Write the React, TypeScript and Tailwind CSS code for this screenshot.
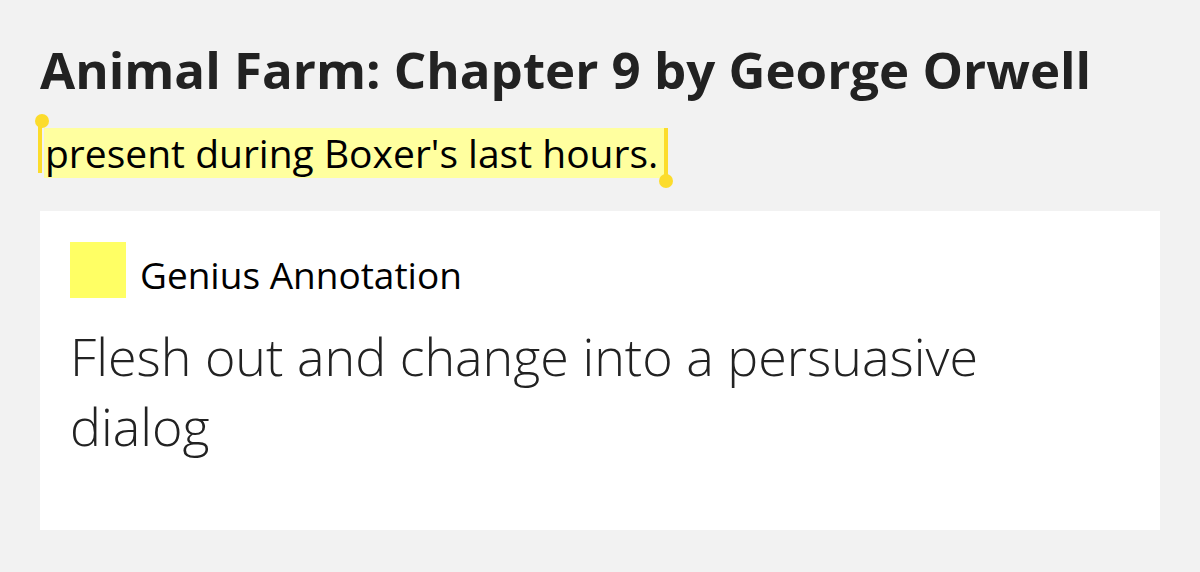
// Genius annotation card: highlighted lyric fragment plus the annotation body.

const font = { fontFamily: "'Open Sans', 'Noto Sans', sans-serif" };

export default function App() {
  return (
    <div className="w-[1200px] h-[572px] bg-[#f2f2f2] px-10 pt-[39px] text-[#222]" style={font}>
      <h1 className="text-[51px] leading-[60px] font-bold">
        Animal Farm: Chapter 9 by George Orwell
      </h1>

      <div className="mt-[29px] ml-[4px]">
        <span className="relative inline-block h-[50px] bg-[#ffff9f] pl-[1px] pr-[6px] text-[39px] leading-[50px] text-black">
          {/* selection handles */}
          <span className="absolute left-[-6px] top-[-7px] block w-[4px] h-[52px] bg-[#fcdc2c]" />
          <span className="absolute left-[-9px] top-[-14px] block w-[14px] h-[14px] rounded-full bg-[#fcdc2c]" />
          present during Boxer's last hours.
          <span className="absolute right-[-4px] top-0 block w-[4px] h-[53px] bg-[#fcdc2c]" />
          <span className="absolute right-[-9px] top-[46px] block w-[14px] h-[14px] rounded-full bg-[#fcdc2c]" />
        </span>
      </div>

      <div className="mt-[33px] bg-white px-[30px] pt-[31px] pb-[69px]">
        <div className="flex items-start gap-[14px]">
          <div className="w-[56px] h-[56px] bg-[#ffff64]" />
          <span className="text-[37px] leading-[56px] text-black pt-[5px]">Genius Annotation</span>
        </div>
        <p className="mt-[18px] text-[52px] leading-[70px] font-light">
          Flesh out and change into a persuasive dialog
        </p>
      </div>
    </div>
  );
}
